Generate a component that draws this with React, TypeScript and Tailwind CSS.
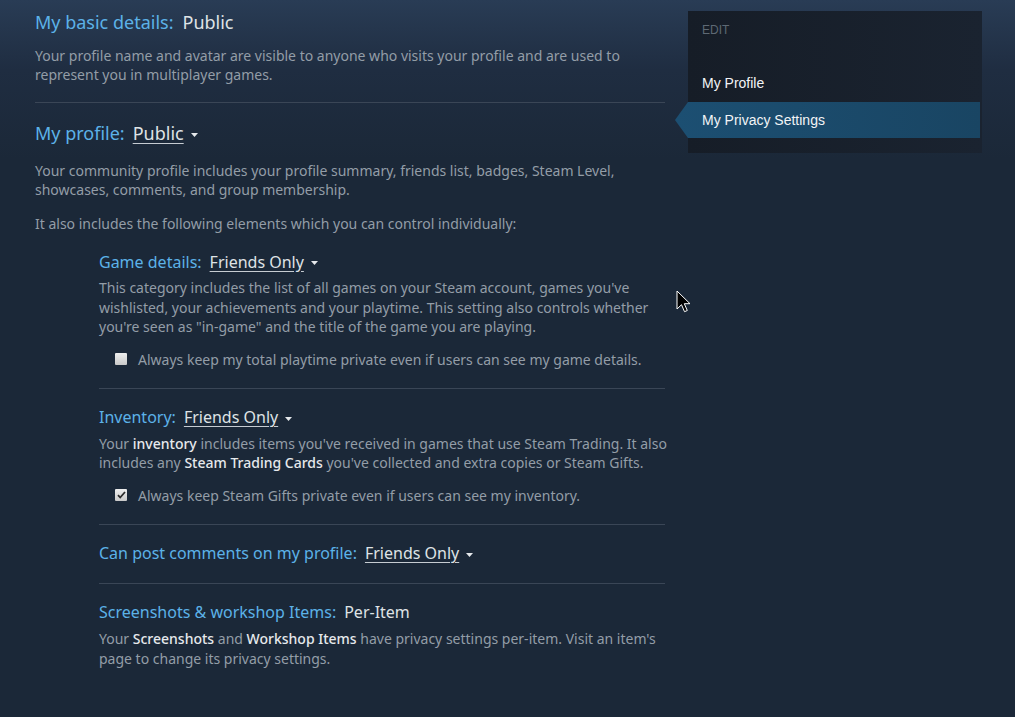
function Caret() {
  return (
    <svg width="7" height="4" viewBox="0 0 7 4" className="ml-[7px] mt-[3px] shrink-0">
      <path d="M0 0h7L3.5 4z" fill="#e6e9ec" />
    </svg>
  )
}

function Dropdown({ value }: { value: string }) {
  return (
    <span className="ml-[8px] inline-flex items-center text-[#dfe3e6]">
      <span className="underline underline-offset-[3px] decoration-[#c6ccd2]">{value}</span>
      <Caret />
    </span>
  )
}

function Check({ checked }: { checked?: boolean }) {
  return (
    <span className="w-[12px] h-[12px] rounded-[1px] bg-[linear-gradient(#eeeeee,#c9c9c9)] flex items-center justify-center shrink-0">
      {checked && (
        <svg width="9" height="8" viewBox="0 0 9 8">
          <path d="M1 4.2l2.2 2.3L8 1" stroke="#2a2a2a" strokeWidth="1.8" fill="none" />
        </svg>
      )}
    </span>
  )
}

function Divider() {
  return <div className="h-px bg-[#3a4656]" />
}

function SubHeading({ label, children }: { label: string; children: React.ReactNode }) {
  return (
    <div className="flex items-center text-[16px] leading-[22px]">
      <span className="text-[#5cb2e8]">{label}</span>
      {children}
    </div>
  )
}

function Pref({ on, text }: { on?: boolean; text: string }) {
  return (
    <label className="mt-[13px] ml-[16px] flex items-center gap-[11px] leading-[19.5px] whitespace-nowrap">
      <Check checked={on} />
      <span>{text}</span>
    </label>
  )
}

export default function App() {
  const b = "text-[#e6e9ec] font-medium"
  return (
    <div
      className="relative h-[717px] w-[1015px] overflow-hidden bg-[#1b2838] bg-[linear-gradient(180deg,#293c55_0px,#1f2d41_70px,#1b2838_160px)] text-[14px] text-[#939da7]"
      style={{ fontFamily: '"Noto Sans", "Open Sans", sans-serif' }}
    >
      <div className="flex">
        <div className="w-[630px] ml-[35px] pt-[10px]">
          <div className="text-[18px] leading-[24px] flex">
            <span className="text-[#5cb2e8]">My basic details:</span>
            <span className="ml-[9px] text-[#dfe3e6]">Public</span>
          </div>
          <p className="mt-[11.5px] leading-[19px] whitespace-nowrap">
            Your profile name and avatar are visible to anyone who visits your profile and are used to
            <br />
            represent you in multiplayer games.
          </p>
          <div className="mt-[18.5px]">
            <Divider />
          </div>

          <div className="mt-[18px] text-[18px] leading-[24px] flex items-center">
            <span className="text-[#5cb2e8]">My profile:</span>
            <Dropdown value="Public" />
          </div>
          <p className="mt-[15.5px] leading-[19px] whitespace-nowrap">
            Your community profile includes your profile summary, friends list, badges, Steam Level,
            <br />
            showcases, comments, and group membership.
          </p>
          <p className="mt-[15px] leading-[19px] whitespace-nowrap">
            It also includes the following elements which you can control individually:
          </p>

          <div className="ml-[64px] mt-[18px]">
            <SubHeading label="Game details:">
              <Dropdown value="Friends Only" />
            </SubHeading>
            <p className="mt-[5.5px] leading-[19.5px] whitespace-nowrap">
              This category includes the list of all games on your Steam account, games you've
              <br />
              wishlisted, your achievements and your playtime. This setting also controls whether
              <br />
              you're seen as "in-game" and the title of the game you are playing.
            </p>
            <Pref text="Always keep my total playtime private even if users can see my game details." />
            <div className="mt-[18.5px]">
              <Divider />
            </div>

            <div className="mt-[17.5px]">
              <SubHeading label="Inventory:">
                <Dropdown value="Friends Only" />
              </SubHeading>
            </div>
            <p className="mt-[5.5px] leading-[19.5px] whitespace-nowrap">
              Your <span className={b}>inventory</span> includes items you've received in games that use Steam Trading. It also
              <br />
              includes any <span className={b}>Steam Trading Cards</span> you've collected and extra copies or Steam Gifts.
            </p>
            <Pref on text="Always keep Steam Gifts private even if users can see my inventory." />
            <div className="mt-[18.5px]">
              <Divider />
            </div>

            <div className="mt-[17.5px]">
              <SubHeading label="Can post comments on my profile:">
                <Dropdown value="Friends Only" />
              </SubHeading>
            </div>
            <div className="mt-[18.5px]">
              <Divider />
            </div>

            <div className="mt-[17.5px]">
              <SubHeading label="Screenshots & workshop Items:">
                <span className="ml-[8px] text-[#dfe3e6]">Per-Item</span>
              </SubHeading>
            </div>
            <p className="mt-[6px] leading-[19.5px] whitespace-nowrap">
              Your <span className={b}>Screenshots</span> and <span className={b}>Workshop Items</span> have privacy settings per-item. Visit an item's
              <br />
              page to change its privacy settings.
            </p>
          </div>
        </div>

        <div className="ml-[23px] mt-[11px] w-[294px] h-[142px] bg-[linear-gradient(90deg,#161d27,#1a2330)]" style={{ fontFamily: '"Liberation Sans", Arial, sans-serif' }}>
          <div className="pl-[14px] pt-[12px] text-[12px] leading-[14px] text-[#5e6974] uppercase">Edit</div>
          <div className="pl-[14px] mt-[37px] text-[14px] leading-[18px] text-[#f2f4f6]">My Profile</div>
          <div
            className="mt-[10px] -ml-[13px] mr-[2px] h-[36px] flex items-center pl-[27px] text-[14px] text-[#f2f4f6] bg-[linear-gradient(90deg,#1c4f72,#194563)]"
            style={{ clipPath: "polygon(13px 0, 100% 0, 100% 100%, 13px 100%, 0 50%)" }}
          >
            My Privacy Settings
          </div>
        </div>
      </div>

      <svg className="absolute left-[676px] top-[290px]" width="14" height="24" viewBox="0 0 14 24">
        <path d="M1 1v18l4.5-4.3 3 7 2.8-1.2-3-6.8H14z" fill="#000" stroke="#fff" strokeWidth="1" />
      </svg>
    </div>
  )
}
